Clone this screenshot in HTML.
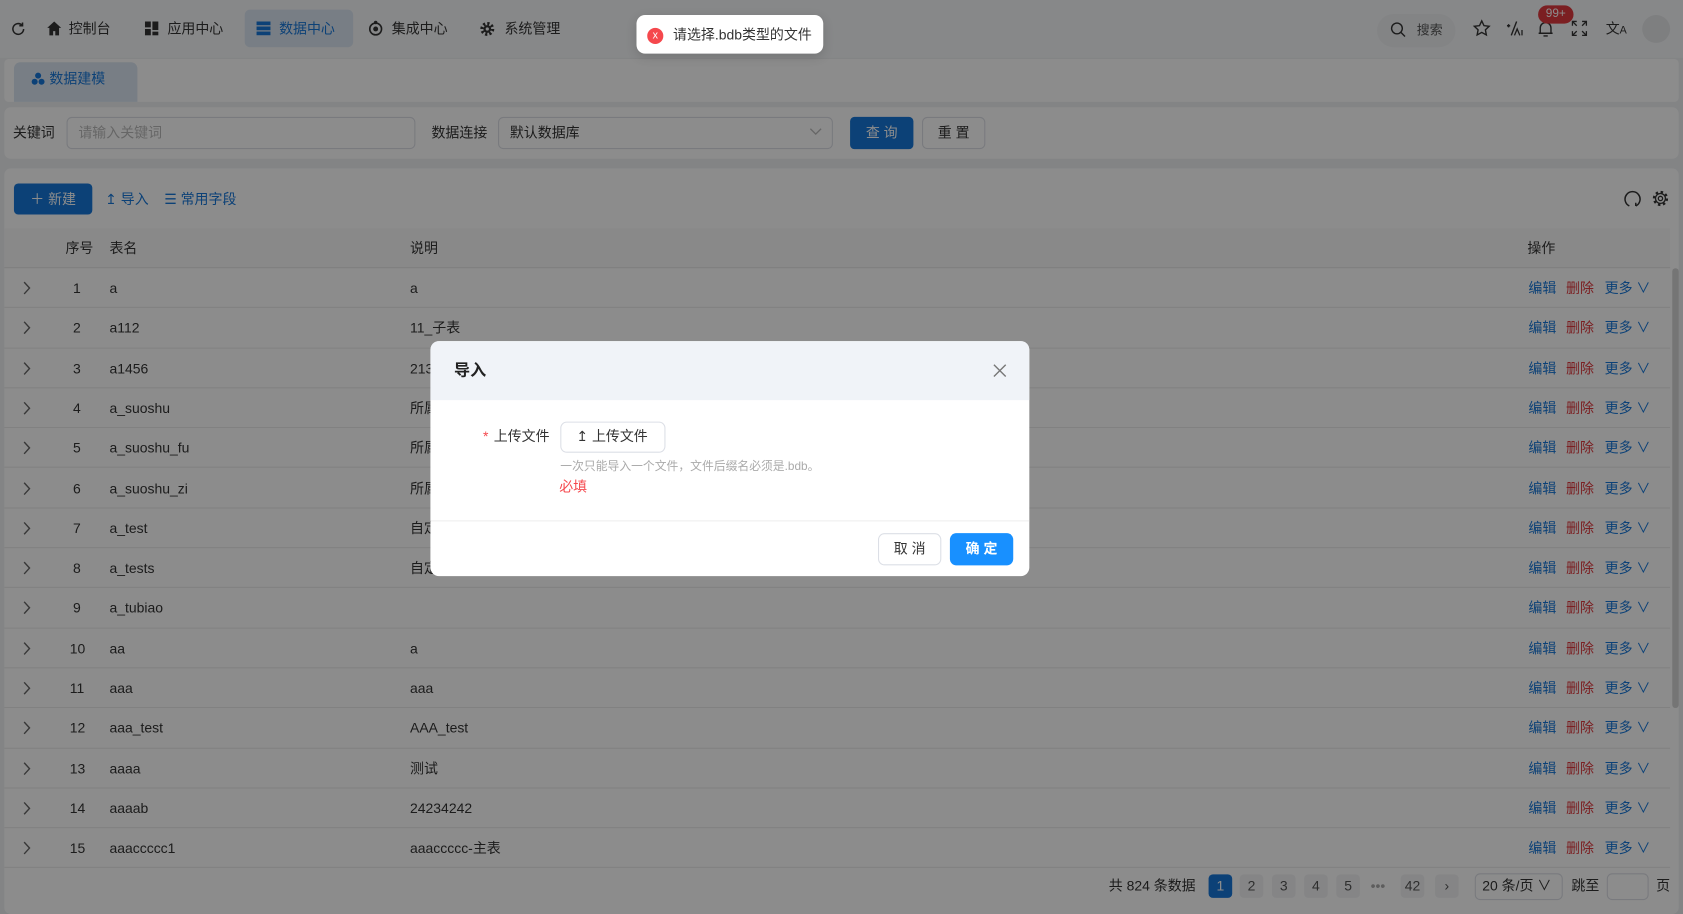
<!DOCTYPE html>
<html><head><meta charset="utf-8">
<style>
*{box-sizing:border-box;margin:0;padding:0}
html,body{width:1683px;height:914px;overflow:hidden;background:#f0f2f5}
body{font-family:"Liberation Sans","Noto Sans CJK SC",sans-serif;font-size:13px;color:#333}
#w{position:absolute;left:0;top:0;width:1568px;height:852px;transform:scale(1.07334,1.0728);transform-origin:0 0;background:#eef0f3}
.a{position:absolute}
.t{position:absolute;white-space:nowrap;line-height:16px}
.top{left:0;top:0;width:1568px;height:54px;background:#f6f7f9}
.nav{font-size:13px;color:#333}
.panel{background:#fff;border-radius:6px}
.inp{border:1px solid #dcdfe6;border-radius:5px;background:#fff}
.btnb{background:#1677d9;color:#fff;border-radius:4px;text-align:center}
.row{position:absolute;left:4px;width:1552px;height:37.3px;border-bottom:1px solid #ececec}
.row span{position:absolute;top:11px;white-space:nowrap;line-height:16px}
.row svg{position:absolute;left:17px;top:12px}
.ov{position:absolute;left:0;top:0;width:1568px;height:852px;background:rgba(0,0,0,0.45)}
.pg{position:absolute;top:815px;width:22px;height:22px;border-radius:4px;background:#f2f3f5;text-align:center;line-height:22px;color:#555}
</style></head><body><div id="w">
<div class="a top"></div>
<svg class="a" style="left:10px;top:20px" width="14" height="14" viewBox="0 0 14 14"><path d="M12 7a5 5 0 1 1-1.5-3.6M11 1v3h-3" fill="none" stroke="#333" stroke-width="1.4"/></svg>
<svg class="a" style="left:43px;top:19px" width="15" height="15" viewBox="0 0 15 15"><path d="M7.5 1L1 7h2v7h3.5v-4h2v4H12V7h2z" fill="#333"/></svg>
<span class="t nav" style="left:64px;top:19px">控制台</span>
<svg class="a" style="left:135px;top:20px" width="13" height="13" viewBox="0 0 13 13"><rect x="0" y="0" width="5.5" height="5.5" fill="#333"/><rect x="7" y="0" width="5.5" height="8" fill="#333"/><rect x="0" y="7" width="5.5" height="6" fill="#333"/><rect x="7" y="9.5" width="5.5" height="3.5" fill="#333"/></svg>
<span class="t nav" style="left:156px;top:19px">应用中心</span>
<div class="a" style="left:228px;top:9px;width:101px;height:35px;background:#dbe6f2;border-radius:5px"></div>
<svg class="a" style="left:239px;top:20px" width="13" height="13" viewBox="0 0 13 13"><rect x="0" y="0" width="13" height="3.5" fill="#1677d9"/><rect x="0" y="4.7" width="13" height="3.5" fill="#1677d9"/><rect x="0" y="9.4" width="13" height="3.5" fill="#1677d9"/></svg>
<span class="t nav" style="left:260px;top:19px;color:#1677d9">数据中心</span>
<svg class="a" style="left:343px;top:19px" width="14" height="15" viewBox="0 0 14 15"><circle cx="7" cy="8" r="5.5" fill="none" stroke="#333" stroke-width="1.5"/><circle cx="7" cy="8" r="2.3" fill="#333"/><circle cx="7" cy="2" r="1.6" fill="#333"/></svg>
<span class="t nav" style="left:365px;top:19px">集成中心</span>
<svg class="a" style="left:447px;top:20px" width="14" height="14" viewBox="0 0 14 14"><circle cx="7" cy="7" r="5" fill="none" stroke="#333" stroke-width="3" stroke-dasharray="2 1.9"/><circle cx="7" cy="7" r="3.6" fill="#333"/><circle cx="7" cy="7" r="1.5" fill="#f6f7f9"/></svg>
<span class="t nav" style="left:470px;top:19px">系统管理</span>
<div class="a" style="left:1283px;top:13px;width:73px;height:31px;border-radius:16px;background:#eef0f3"></div>
<svg class="a" style="left:1295px;top:20px" width="15" height="15" viewBox="0 0 15 15"><circle cx="6.5" cy="6.5" r="5" fill="none" stroke="#333" stroke-width="1.3"/><path d="M10.2 10.2L14 14" stroke="#333" stroke-width="1.3"/></svg>
<span class="t" style="left:1320px;top:20px;font-size:12px;color:#555">搜索</span>
<svg class="a" style="left:1372px;top:18px" width="17" height="17" viewBox="0 0 17 17"><path d="M8.5 1.5l2.1 4.4 4.8.6-3.5 3.3.9 4.8-4.3-2.4-4.3 2.4.9-4.8L1.6 6.5l4.8-.6z" fill="none" stroke="#333" stroke-width="1.3"/></svg>
<svg class="a" style="left:1402px;top:18px" width="18" height="17" viewBox="0 0 18 17"><path d="M11 2L6 15M2 6h3M3.5 4.5v3" stroke="#333" stroke-width="1.3" fill="none"/><path d="M9 15l2.5-6 2.5 6M16 10v5" stroke="#333" stroke-width="1.2" fill="none"/></svg>
<svg class="a" style="left:1432px;top:18px" width="16" height="18" viewBox="0 0 16 18"><path d="M3 13V8a5 5 0 0 1 10 0v5h1.5H1.5zM6 15.5h4" fill="none" stroke="#333" stroke-width="1.3"/></svg>
<div class="a" style="left:1433px;top:5px;width:33px;height:17px;border-radius:9px;background:#e0393e;color:#fff;font-size:11px;text-align:center;line-height:17px">99+</div>
<svg class="a" style="left:1464px;top:19px" width="15" height="15" viewBox="0 0 15 15"><path d="M1 5V1h4M1 1l4 4M10 1h4v4M14 1l-4 4M1 10v4h4M1 14l4-4M14 10v4h-4M14 14l-4-4" fill="none" stroke="#333" stroke-width="1.2"/></svg>
<span class="t" style="left:1496px;top:19px;font-size:13px;color:#333">文<span style="font-size:10px">A</span></span>
<div class="a" style="left:1530px;top:14px;width:26px;height:26px;border-radius:50%;background:#e5e7ea"></div>
<div class="a" style="left:4px;top:55px;width:1560px;height:40px;background:#fff;border-radius:4px"></div>
<div class="a" style="left:13px;top:58px;width:115px;height:37px;background:#dbe6f2;border-radius:6px 6px 0 0"></div>
<svg class="a" style="left:29px;top:67px" width="13" height="13" viewBox="0 0 13 13"><circle cx="6.5" cy="3.5" r="2.8" fill="#1677d9"/><circle cx="3.3" cy="9.2" r="2.8" fill="#1677d9"/><circle cx="9.7" cy="9.2" r="2.8" fill="#1677d9"/></svg>
<span class="t" style="left:46px;top:66px;color:#1677d9">数据建模</span>
<div class="a panel" style="left:4px;top:100px;width:1560px;height:48px"></div>
<span class="t" style="left:12px;top:116px">关键词</span>
<div class="a inp" style="left:62px;top:109px;width:325px;height:30px"></div>
<span class="t" style="left:73px;top:116px;color:#bbb">请输入关键词</span>
<span class="t" style="left:402px;top:116px">数据连接</span>
<div class="a inp" style="left:464px;top:109px;width:312px;height:30px"></div>
<span class="t" style="left:475px;top:116px">默认数据库</span>
<svg class="a" style="left:754px;top:119px" width="12" height="8" viewBox="0 0 12 8"><path d="M1 1l5 5 5-5" fill="none" stroke="#bbb" stroke-width="1.2"/></svg>
<div class="a btnb" style="left:792px;top:109px;width:59px;height:30px;line-height:30px">查 询</div>
<div class="a inp" style="left:859px;top:109px;width:59px;height:30px;text-align:center;line-height:28px">重 置</div>
<div class="a panel" style="left:4px;top:157px;width:1560px;height:695px"></div>
<div class="a btnb" style="left:13px;top:171px;width:73px;height:29px;line-height:29px">＋ 新建</div>
<span class="t" style="left:98px;top:178px;color:#1677d9">↥ 导入</span>
<span class="t" style="left:153px;top:178px;color:#1677d9">☰ 常用字段</span>
<svg class="a" style="left:1513px;top:177px" width="16" height="17" viewBox="0 0 16 17"><path d="M5 15A7 7 0 1 1 11 15M11 15v-3" fill="none" stroke="#333" stroke-width="1.4"/></svg>
<svg class="a" style="left:1538px;top:176px" width="18" height="18" viewBox="0 0 18 18"><circle cx="9" cy="9" r="5.8" fill="none" stroke="#333" stroke-width="2.6" stroke-dasharray="2.2 2.35"/><circle cx="9" cy="9" r="4.6" fill="none" stroke="#333" stroke-width="1.2"/><circle cx="9" cy="9" r="2" fill="none" stroke="#333" stroke-width="1.2"/></svg>
<div class="a" style="left:4px;top:213px;width:1552px;height:37px;background:#fafafa;border-bottom:1px solid #e8e8e8"></div>
<span class="t" style="left:61px;top:224px">序号</span>
<span class="t" style="left:102px;top:224px">表名</span>
<span class="t" style="left:382px;top:224px">说明</span>
<span class="t" style="left:1423px;top:224px">操作</span>
<div class="a" style="left:1558px;top:250px;width:6px;height:410px;background:#d6d6d6;border-radius:3px"></div>
<div id="rows"></div>
<span class="t" style="left:1033px;top:818px">共 824 条数据</span>
<div class="pg" style="left:1126px;background:#1677d9;color:#fff">1</div>
<div class="pg" style="left:1155px">2</div>
<div class="pg" style="left:1185px">3</div>
<div class="pg" style="left:1215px">4</div>
<div class="pg" style="left:1245px">5</div>
<span class="t" style="left:1277px;top:818px;color:#aaa">•••</span>
<div class="pg" style="left:1305px">42</div>
<div class="pg" style="left:1337px">›</div>
<div class="a inp" style="left:1374px;top:814px;width:82px;height:25px"></div>
<span class="t" style="left:1381px;top:818px">20 条/页 ∨</span>
<span class="t" style="left:1464px;top:818px">跳至</span>
<div class="a inp" style="left:1497px;top:814px;width:39px;height:25px"></div>
<span class="t" style="left:1543px;top:818px">页</span>
<div class="ov"></div>
<div class="a" style="left:593px;top:14px;width:174px;height:36px;background:#fff;border-radius:8px;box-shadow:0 3px 10px rgba(0,0,0,.15)"></div>
<div class="a" style="left:603px;top:26px;width:15px;height:15px;border-radius:50%;background:#f5484d;color:#fff;font-size:10px;text-align:center;line-height:15px">x</div>
<span class="t" style="left:627px;top:25px;color:#333">请选择.bdb类型的文件</span>
<div class="a" style="left:401px;top:318px;width:558px;height:219px;background:#fff;border-radius:8px;overflow:hidden">
<div class="a" style="left:0;top:0;width:558px;height:55px;background:#f0f3f8"></div>
<span class="t" style="left:22px;top:20px;font-size:15px;font-weight:bold;color:#222">导入</span>
<svg class="a" style="left:524px;top:21px" width="13" height="13" viewBox="0 0 13 13"><path d="M1 1l11 11M12 1L1 12" stroke="#777" stroke-width="1.3"/></svg>
<span class="t" style="left:49px;top:81px;color:#f5484d">*</span>
<span class="t" style="left:59px;top:81px">上传文件</span>
<div class="a inp" style="left:121px;top:75px;width:98px;height:29px;border-radius:6px"></div>
<span class="t" style="left:136px;top:81px">↥ 上传文件</span>
<span class="t" style="left:121px;top:109px;font-size:11px;color:#aaa">一次只能导入一个文件，文件后缀名必须是.bdb。</span>
<span class="t" style="left:120px;top:128px;color:#f5484d">必填</span>
<div class="a" style="left:0;top:167px;width:558px;height:1px;background:#eee"></div>
<div class="a inp" style="left:417px;top:179px;width:59px;height:30px;border-radius:6px;text-align:center;line-height:28px">取 消</div>
<div class="a" style="left:484px;top:179px;width:59px;height:30px;border-radius:6px;background:#1890ff;color:#fff;text-align:center;line-height:30px;font-weight:bold">确 定</div>
</div>
</div>
<script>
var d=[["a","a"],["a112","11_子表"],["a1456","2134"],["a_suoshu","所属表"],["a_suoshu_fu","所属表"],["a_suoshu_zi","所属表"],["a_test","自定义"],["a_tests","自定义"],["a_tubiao",""],["aa","a"],["aaa","aaa"],["aaa_test","AAA_test"],["aaaa","测试"],["aaaab","24234242"],["aaaccccc1","aaaccccc-主表"]];
var h="";for(var i=0;i<15;i++){var y=250+i*37.3;
h+='<div class="row" style="top:'+y+'px"><svg width="8" height="13" viewBox="0 0 8 13"><path d="M1.5 1l5 5.5-5 5.5" fill="none" stroke="#666" stroke-width="1.3"/></svg><span style="left:'+(i<9?64:61)+'px">'+(i+1)+'</span><span style="left:98px">'+d[i][0]+'</span><span style="left:378px">'+d[i][1]+'</span><span style="left:1420px;color:#1677d9">编辑</span><span style="left:1455px;color:#e0393e">删除</span><span style="left:1491px;color:#1677d9">更多 ∨</span></div>';}
document.getElementById("rows").outerHTML=h;
</script>
</body></html>
